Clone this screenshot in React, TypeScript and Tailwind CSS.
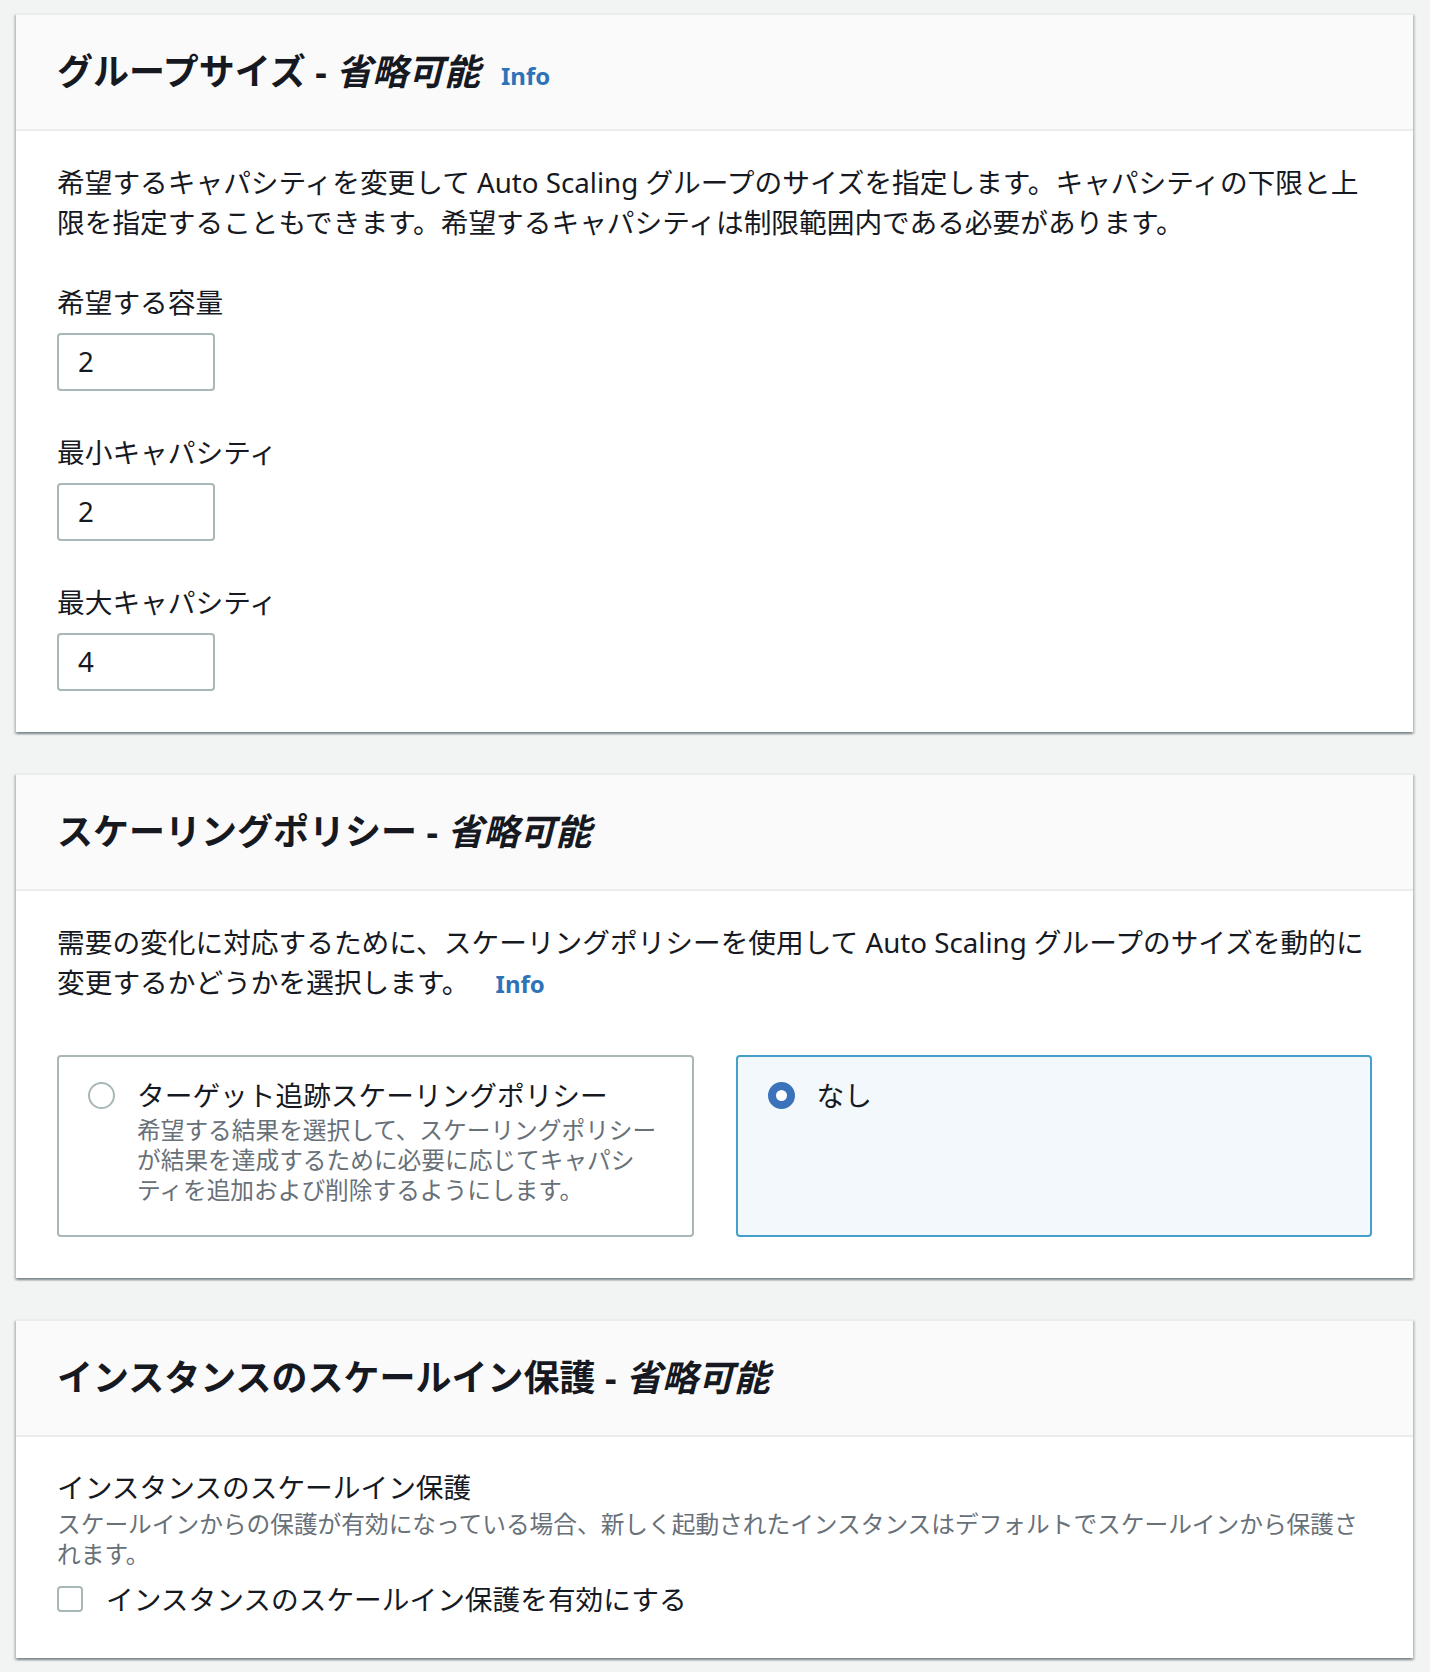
import React from 'react';

const cardShadow =
  'bg-white border-t-2 border-[#eaeded] shadow-[0_2px_2px_0_rgba(0,28,36,0.3),2px_2px_2px_0_rgba(0,28,36,0.15),-2px_2px_2px_0_rgba(0,28,36,0.15)]';

const CardHeader = ({ title, info }: { title: string; info?: boolean }) => (
  <div className="h-[116px] flex items-center px-[41px] bg-[#fafafa] border-b-2 border-[#eaeded]">
    <h2 className="text-[36px] leading-[44px] font-bold text-[#16191f]">
      {title} - <i>省略可能</i>
    </h2>
    {info && (
      <span className="ml-[21px] mt-[8px] text-[24px] leading-[30px] font-bold text-[#2e73b8]">
        Info
      </span>
    )}
  </div>
);

const NumberField = ({
  label,
  value,
  first,
}: {
  label: string;
  value: string;
  first?: boolean;
}) => (
  <div className={first ? 'mt-[40px]' : 'mt-[41px]'}>
    <div className="text-[27.7px] leading-[40px] text-[#16191f]">{label}</div>
    <div className="mt-[11px] h-[58px] w-[158px] rounded-[4px] border-2 border-[#aab7b8] bg-white flex items-center pl-[19px] text-[27.7px] text-[#16191f]">
      {value}
    </div>
  </div>
);

const Tile = ({
  label,
  description,
  selected,
}: {
  label: string;
  description?: React.ReactNode;
  selected?: boolean;
}) => (
  <div
    className={
      selected
        ? 'h-[182px] rounded-[4px] border-2 border-[#44a0c8] bg-[#f2f8fc] flex items-start pl-[30px] pt-[18px]'
        : 'h-[182px] rounded-[4px] border-2 border-[#aab7b8] bg-white flex items-start pl-[29px] pt-[18px]'
    }
  >
    <div className="h-[40px] flex items-center">
      {selected ? (
        <div className="w-[27px] h-[27px] rounded-full border-[8px] border-[#3a73b9] bg-white" />
      ) : (
        <div className="w-[27px] h-[27px] rounded-full border-2 border-[#aab7b8] bg-white" />
      )}
    </div>
    <div className="ml-[22px]">
      <div className="text-[27.7px] leading-[40px] text-[#16191f]">{label}</div>
      {description && (
        <div className="w-[530px] text-[23.7px] leading-[30px] text-[#687078]">
          {description}
        </div>
      )}
    </div>
  </div>
);

export default function App() {
  return (
    <div
      lang="ja"
      className="min-h-screen bg-[#f2f3f3] pl-[16px] pr-[17px] pt-[13px] pb-[16px] flex flex-col gap-[41px] font-['Noto_Sans','Noto_Sans_CJK_JP',sans-serif]"
    >
      {/* グループサイズ */}
      <section className={cardShadow}>
        <CardHeader title="グループサイズ" info />
        <div className="px-[41px] pt-[31px] pb-[41px]">
          <p className="text-[27.7px] leading-[40px] text-[#16191f]">
            希望するキャパシティを変更して Auto Scaling
            グループのサイズを指定します。キャパシティの下限と上限を指定することもできます。希望するキャパシティは制限範囲内である必要があります。
          </p>
          <NumberField label="希望する容量" value="2" first />
          <NumberField label="最小キャパシティ" value="2" />
          <NumberField label="最大キャパシティ" value="4" />
        </div>
      </section>

      {/* スケーリングポリシー */}
      <section className={cardShadow}>
        <CardHeader title="スケーリングポリシー" />
        <div className="px-[41px] pt-[31px] pb-[41px]">
          <p className="text-[27.7px] leading-[40px] text-[#16191f]">
            需要の変化に対応するために、スケーリングポリシーを使用して Auto Scaling
            グループのサイズを動的に変更するかどうかを選択します。
            <span className="ml-[26px] text-[24px] font-bold text-[#2e73b8]">Info</span>
          </p>
          <div className="mt-[51px] grid grid-cols-2 gap-[42px]">
            <Tile
              label="ターゲット追跡スケーリングポリシー"
              description={
                <>
                  希望する結果を選択して、スケーリングポリシーが結果を達成するために必要に応じてキャパシ
                  <span className="whitespace-nowrap">ティ</span>
                  を追加および削除するようにします。
                </>
              }
            />
            <Tile label="なし" selected />
          </div>
        </div>
      </section>

      {/* スケールイン保護 */}
      <section className={cardShadow}>
        <CardHeader title="インスタンスのスケールイン保護" />
        <div className="px-[41px] pt-[30px] pb-[39px]">
          <div className="text-[27.7px] leading-[40px] text-[#16191f]">
            インスタンスのスケールイン保護
          </div>
          <p className="mt-[2px] text-[23.7px] leading-[30px] text-[#687078]">
            スケールインからの保護が有効になっている場合、新しく起動されたインスタンスはデフォルトでスケールインから保護されます。
          </p>
          <label className="mt-[10px] h-[40px] flex items-center">
            <span className="w-[26px] h-[26px] rounded-[4px] border-2 border-[#aab7b8] bg-white" />
            <span className="ml-[23px] text-[27.7px] leading-[40px] text-[#16191f]">
              インスタンスのスケールイン保護を有効にする
            </span>
          </label>
        </div>
      </section>
    </div>
  );
}
